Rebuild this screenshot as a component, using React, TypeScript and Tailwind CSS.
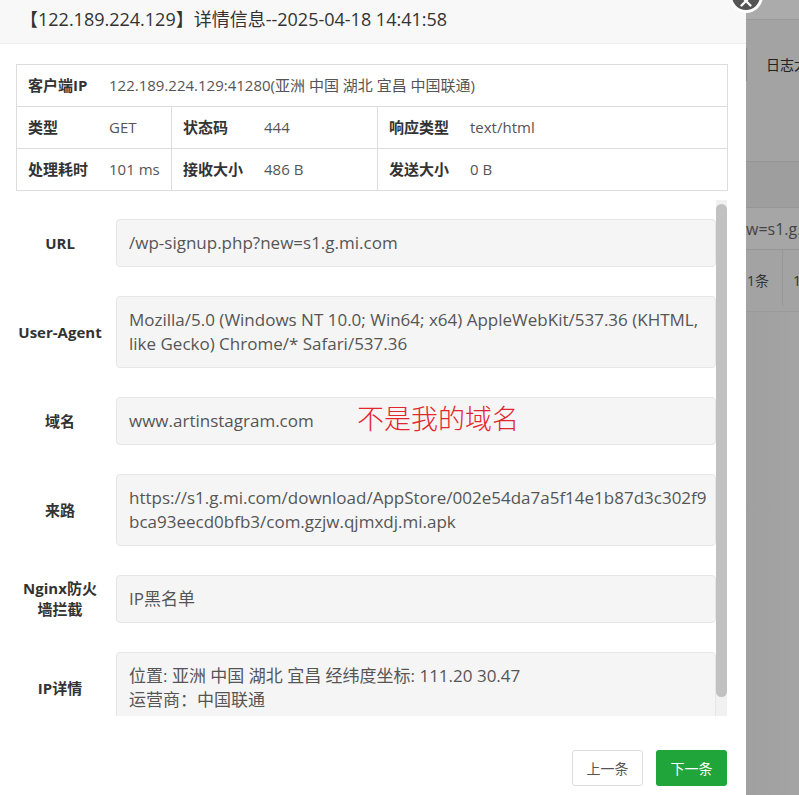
import { X } from 'lucide-react';

const font = { fontFamily: '"Open Sans", "Noto Sans CJK SC", sans-serif' };

const fields = [
    { label: 'URL', lines: ['/wp-signup.php?new=s1.g.mi.com'] },
    { label: 'User-Agent', lines: ['Mozilla/5.0 (Windows NT 10.0; Win64; x64) AppleWebKit/537.36 (KHTML,', 'like Gecko) Chrome/* Safari/537.36'], nowrap: true },
    { label: '域名', lines: ['www.artinstagram.com'], note: true },
    { label: '来路', lines: ['https://s1.g.mi.com/download/AppStore/002e54da7a5f14e1b87d3c302f9', 'bca93eecd0bfb3/com.gzjw.qjmxdj.mi.apk'] },
    { label: 'Nginx防火墙拦截', lines: ['IP黑名单'] },
    { label: 'IP详情', lines: ['位置: 亚洲 中国 湖北 宜昌 经纬度坐标: 111.20 30.47', '运营商：中国联通'] },
];

const Cell = ({ label, value, className = '' }: { label: string; value: string; className?: string }) => (
    <div className={`flex items-center h-full ${className}`}>
        <span className="w-[92px] pl-[11px] shrink-0 font-bold text-[#333] text-[15px]">{label}</span>
        <span className="text-[#555] text-[15px]">{value}</span>
    </div>
);

export default function App() {
    return (
        <div className="relative flex w-[799px] h-[795px] overflow-hidden" style={font}>
            {/* modal */}
            <div className="w-[746px] h-full bg-white flex flex-col shrink-0">
                <div className="h-[44px] bg-[#f8f8f8] border-b border-[#eee] flex items-center pl-[20px] pb-[5px] text-[18px] text-[#333]">
                    【122.189.224.129】详情信息--2025-04-18 14:41:58
                </div>

                {/* summary table */}
                <div className="mt-[20px] mx-[16px] w-[712px] border border-[#ddd]">
                    <div className="h-[42px] border-b border-[#ddd]">
                        <Cell label="客户端IP" value="122.189.224.129:41280(亚洲 中国 湖北 宜昌 中国联通)" />
                    </div>
                    <div className="h-[42px] border-b border-[#ddd] grid grid-cols-[155px_206px_1fr]">
                        <Cell label="类型" value="GET" className="border-r border-[#ddd]" />
                        <Cell label="状态码" value="444" className="border-r border-[#ddd]" />
                        <Cell label="响应类型" value="text/html" />
                    </div>
                    <div className="h-[41px] grid grid-cols-[155px_206px_1fr]">
                        <Cell label="处理耗时" value="101 ms" className="border-r border-[#ddd]" />
                        <Cell label="接收大小" value="486 B" className="border-r border-[#ddd]" />
                        <Cell label="发送大小" value="0 B" />
                    </div>
                </div>

                {/* scrolling form */}
                <div className="mt-[9px] ml-[16px] w-[711px] h-[516px] flex">
                    <div className="flex-1 min-w-0 overflow-hidden pt-[19px] flex flex-col gap-[29px]">
                        {fields.map((f) => (
                            <div key={f.label} className="flex items-center shrink-0">
                                <div
                                    className={`w-[88px] mr-[12px] shrink-0 text-center text-[15px] font-bold text-[#333] leading-[21px] ${f.nowrap ? 'whitespace-nowrap' : ''}`}
                                >
                                    {f.label}
                                </div>
                                <div className="relative flex-1 min-w-0 bg-[#f5f5f5] border border-[#e6e6e6] rounded-[4px] px-[12px] py-[11px] text-[17px] leading-[24px] text-[#555]">
                                    {f.lines.map((l) => (
                                        <div key={l} className="whitespace-nowrap">{l}</div>
                                    ))}
                                    {f.note && (
                                        <span
                                            className="absolute left-[240px] top-[2px] text-[27px] leading-[36px] text-[#e3262e] font-light"
                                            style={{ fontFamily: '"Noto Sans CJK SC", serif' }}
                                        >
                                            不是我的域名
                                        </span>
                                    )}
                                </div>
                            </div>
                        ))}
                    </div>
                    <div className="w-[11px] shrink-0 bg-[#f1f1f1] flex flex-col">
                        <div className="mt-[4px] h-[493px] bg-[#c1c1c1] rounded-full" />
                    </div>
                </div>

                {/* footer */}
                <div className="mt-[34px] mr-[19px] flex justify-end gap-[13px] text-[14px]">
                    <button className="w-[71px] h-[36px] border border-[#ddd] rounded-[3px] bg-white text-[#555]">上一条</button>
                    <button className="w-[71px] h-[36px] rounded-[3px] bg-[#20a53a] text-white">下一条</button>
                </div>
            </div>

            {/* dimmed page behind */}
            <div className="flex-1 bg-[#a3a3a3] flex flex-col text-[14px] text-[#222]">
                <div className="h-[20px] bg-[#ababab] border-b border-[#9a9a9a]" />
                <div className="h-[141px] flex">
                    <div className="w-px h-[33px] mt-[28px] bg-[#8a8a8a]" />
                    <span className="ml-[19px] mt-[34px] whitespace-nowrap">日志大小</span>
                </div>
                <div className="h-[46px] bg-[#9e9e9e] border-t border-[#969696]" />
                <div className="h-[43px] bg-[#a6a6a6] border-y border-[#979797] flex items-center text-[16px] text-[#444] whitespace-nowrap overflow-hidden">
                    w=s1.g.mi.com
                </div>
                <div className="h-[62px] flex items-start border-b border-[#9a9a9a]">
                    <span className="w-[37px] pl-[1px] h-[56px] pt-[20px] border-r border-[#979797] text-[#333]">1条</span>
                    <span className="pl-[10px] pt-[20px] text-[#333]">1</span>
                </div>
                <div className="flex-1 bg-gradient-to-r from-[#a0a0a0] to-[#a8a8a8]" />
            </div>

            {/* close button */}
            <div className="absolute left-[729px] top-[-21px] w-[34px] h-[34px] rounded-full bg-[#555] border-[3px] border-white flex items-center justify-center">
                <X className="w-[18px] h-[18px] text-white mt-[10px]" strokeWidth={3} />
            </div>
        </div>
    );
}
